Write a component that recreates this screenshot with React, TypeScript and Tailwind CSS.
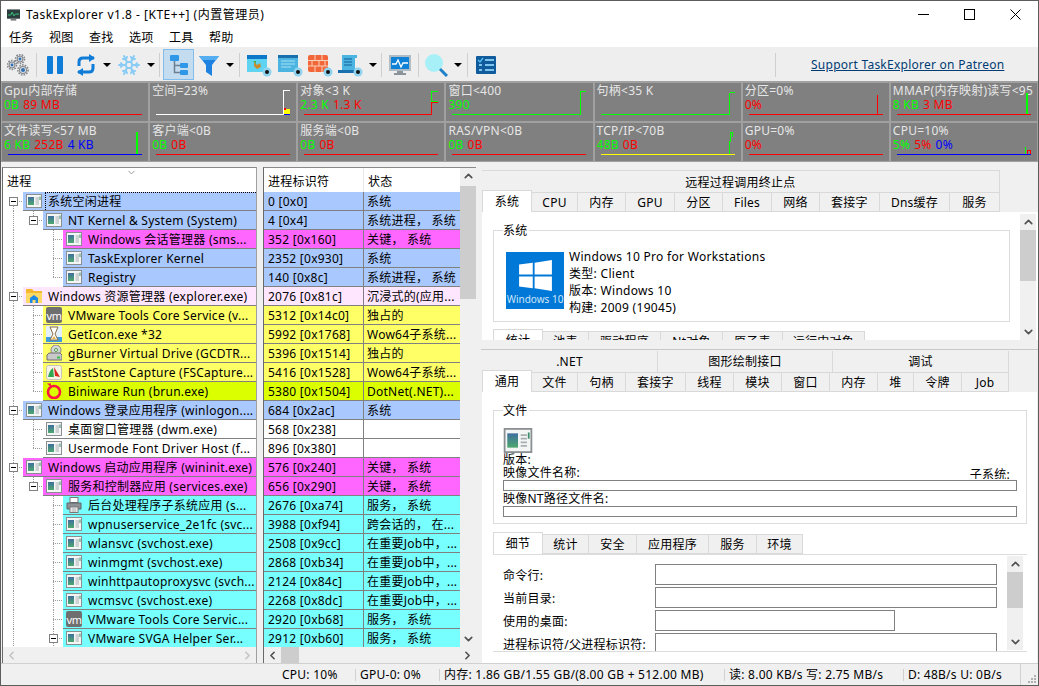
import { ChevronUp, ChevronDown, ChevronLeft, ChevronRight, Snowflake } from "lucide-react";
import type { ReactNode } from "react";

const C: Record<string, string> = {
  b: "bg-[#a8c8fe]",
  m: "bg-[#ff66ff]",
  p: "bg-[#ffe6ff]",
  y: "bg-[#ffff66]",
  l: "bg-[#dcff00]",
  c: "bg-[#77ffff]",
  w: "bg-white",
};
const INDENT = ["w-[20px]", "w-[40px]", "w-[60px]"];

type Row = { l: number; n: string; id: string; s: string; c: string; i: string; t?: boolean; last?: boolean };

const rows: Row[] = [
  { l: 0, n: "系统空闲进程", id: "0 [0x0]", s: "系统", c: "b", i: "app", t: true },
  { l: 1, n: "NT Kernel & System (System)", id: "4 [0x4]", s: "系统进程， 系统", c: "b", i: "app", t: true, last: true },
  { l: 2, n: "Windows 会话管理器 (sms...", id: "352 [0x160]", s: "关键， 系统", c: "m", i: "app" },
  { l: 2, n: "TaskExplorer Kernel", id: "2352 [0x930]", s: "系统", c: "b", i: "app" },
  { l: 2, n: "Registry", id: "140 [0x8c]", s: "系统进程， 系统", c: "b", i: "app", last: true },
  { l: 0, n: "Windows 资源管理器 (explorer.exe)", id: "2076 [0x81c]", s: "沉浸式的(应用...", c: "p", i: "folder", t: true },
  { l: 1, n: "VMware Tools Core Service (v...", id: "5312 [0x14c0]", s: "独占的", c: "y", i: "vm" },
  { l: 1, n: "GetIcon.exe *32", id: "5992 [0x1768]", s: "Wow64子系统...", c: "y", i: "hour" },
  { l: 1, n: "gBurner Virtual Drive (GCDTR...", id: "5396 [0x1514]", s: "独占的", c: "y", i: "burner" },
  { l: 1, n: "FastStone Capture (FSCapture...", id: "5416 [0x1528]", s: "Wow64子系统...", c: "y", i: "fs" },
  { l: 1, n: "Biniware Run (brun.exe)", id: "5380 [0x1504]", s: "DotNet(.NET)...", c: "l", i: "ring", last: true },
  { l: 0, n: "Windows 登录应用程序 (winlogon....", id: "684 [0x2ac]", s: "系统", c: "b", i: "app", t: true },
  { l: 1, n: "桌面窗口管理器 (dwm.exe)", id: "568 [0x238]", s: "", c: "w", i: "app" },
  { l: 1, n: "Usermode Font Driver Host (f...", id: "896 [0x380]", s: "", c: "w", i: "app", last: true },
  { l: 0, n: "Windows 启动应用程序 (wininit.exe)", id: "576 [0x240]", s: "关键， 系统", c: "m", i: "app", t: true },
  { l: 1, n: "服务和控制器应用 (services.exe)", id: "656 [0x290]", s: "关键， 系统", c: "m", i: "app", t: true, last: true },
  { l: 2, n: "后台处理程序子系统应用 (s...", id: "2676 [0xa74]", s: "服务， 系统", c: "c", i: "printer" },
  { l: 2, n: "wpnuserservice_2e1fc (svc...", id: "3988 [0xf94]", s: "跨会话的， 在...", c: "c", i: "app" },
  { l: 2, n: "wlansvc (svchost.exe)", id: "2508 [0x9cc]", s: "在重要Job中，...", c: "c", i: "app" },
  { l: 2, n: "winmgmt (svchost.exe)", id: "2868 [0xb34]", s: "在重要Job中，...", c: "c", i: "app" },
  { l: 2, n: "winhttpautoproxysvc (svch...", id: "2124 [0x84c]", s: "在重要Job中，...", c: "c", i: "app" },
  { l: 2, n: "wcmsvc (svchost.exe)", id: "2268 [0x8dc]", s: "在重要Job中，...", c: "c", i: "app" },
  { l: 2, n: "VMware Tools Core Servic...", id: "2920 [0xb68]", s: "服务， 系统", c: "c", i: "vm" },
  { l: 2, n: "VMware SVGA Helper Ser...", id: "2912 [0xb60]", s: "服务， 系统", c: "c", i: "app", t: true },
];

const G = "text-[#00ff00]";
const R = "text-[#ff0000]";
const B = "text-[#0000ff]";

type Graph = { title: string; vals: [string, string][]; lines: [string, string][]; fill?: ReactNode };

const red = "M6 31.5H140";
const graphs: Graph[] = [
  { title: "Gpu内部存储", vals: [["0B", G], ["89 MB", R]], lines: [[red, "#ff0000"]] },
  {
    title: "空间=23%", vals: [], lines: [["M6 31.5H133.5V7.5H140", "#ffffff"], ["M134 31.5H140", "#0000ff"]],
    fill: <><rect x="134" y="26" width="6" height="5" fill="#ffff00" /><rect x="134" y="25" width="2" height="2" fill="#ff0000" /></>,
  },
  { title: "对象<3 K", vals: [["2.3 K", G], ["1.3 K", R]], lines: [["M6 31.5H133.5V19.5H140", "#ff0000"], ["M140 8.5H133.5V18.5H140", "#00ff00"]] },
  { title: "窗口<400", vals: [["390", G]], lines: [["M6 31.5H134.5V8.5H140", "#00ff00"]] },
  { title: "句柄<35 K", vals: [], lines: [["M6 31.5H134.5V10.5L136 9.5H140", "#00ff00"]] },
  { title: "分区=0%", vals: [["0%", R]], lines: [[red, "#ff0000"], ["M134.5 31V12", "#ff0000"]] },
  { title: "MMAP(内存映射)读写<95", vals: [["8 KB", G], ["3 MB", R]], lines: [[red, "#ff0000"], ["M135 31V10M136 31V10", "#00ff00"]] },
  { title: "文件读写<57 MB", vals: [["6 KB", G], ["252B", R], ["4 KB", B]], lines: [["M6 31.5H140", "#0000ff"], ["M134.5 31V9M135.5 31V9", "#00ff00"]] },
  { title: "客户端<0B", vals: [["0B", G], ["0B", R]], lines: [[red, "#ff0000"]] },
  { title: "服务端<0B", vals: [["0B", G], ["0B", R]], lines: [[red, "#ff0000"]] },
  { title: "RAS/VPN<0B", vals: [["0B", G], ["0B", R]], lines: [[red, "#ff0000"]] },
  { title: "TCP/IP<70B", vals: [["48B", G], ["0B", R]], lines: [["M6 31.5H140", "#ffff00"], ["M134.5 31V18H135.5V9H137.5V14", "#00ff00"]] },
  { title: "GPU=0%", vals: [["0%", R]], lines: [[red, "#ff0000"]] },
  { title: "CPU=10%", vals: [["5%", G], ["5%", R], ["0%", B]], lines: [["M6 31.5H140", "#0000ff"], ["M134.5 31V24", "#00ff00"], ["M136 31V27H139V31", "#ff0000"]] },
];

function AppIcon({ big }: { big?: boolean }) {
  return (
    <svg viewBox="0 0 16 14" className={big ? "w-[30px] h-[25px]" : "w-[16px] h-[14px] shrink-0"}>
      <defs>
        <linearGradient id="appg" x1="0" y1="0" x2="0" y2="1">
          <stop offset="0" stopColor="#3f6f9f" />
          <stop offset="1" stopColor="#4da86d" />
        </linearGradient>
      </defs>
      <rect x="0.5" y="0.5" width="15" height="13" fill="#f4f6f6" stroke="#8a8f92" />
      <rect x="2" y="3" width="6" height="8" fill="url(#appg)" />
      <path d="M9.5 4H13M9.5 6H13M9.5 8H13M9.5 10H13" stroke="#a9aeb0" />
      <path d="M14 2.5V6" stroke="#3c8f6a" />
    </svg>
  );
}

function RowIcon({ k }: { k: string }) {
  if (k === "app") return <AppIcon />;
  if (k === "folder")
    return (
      <svg viewBox="0 0 16 16" className="w-[16px] h-[16px] shrink-0">
        <path d="M0 1H6L8 3H16V15H0Z" fill="#f4b92e" />
        <rect x="0" y="5" width="16" height="10" fill="#ffd966" />
        <path d="M4 15V10L8 7L12 10V15H9.5V12H6.5V15Z" fill="#1e88e5" />
      </svg>
    );
  if (k === "vm")
    return (
      <div className="w-[16px] h-[16px] shrink-0 rounded-[2px] bg-[#6f6f6f] flex items-center justify-center text-white text-[11px] tracking-[-0.5px] leading-none">
        vm
      </div>
    );
  if (k === "hour")
    return (
      <svg viewBox="0 0 16 16" className="w-[16px] h-[16px] shrink-0">
        <rect x="0" y="0" width="16" height="16" fill="#e4f1fb" />
        <rect x="0" y="11" width="16" height="5" fill="#3d9be0" />
        <path d="M4 1H12L9 8L12 14H4L7 8Z" fill="#fff" stroke="#8d6e3f" />
        <path d="M6 13L8 10L10 13Z" fill="#e8b04a" />
      </svg>
    );
  if (k === "burner")
    return (
      <svg viewBox="0 0 16 16" className="w-[16px] h-[16px] shrink-0">
        <circle cx="10" cy="5" r="5" fill="#d6d6d6" stroke="#888" />
        <circle cx="10" cy="5" r="1.5" fill="#fff" stroke="#4a9a4a" />
        <path d="M1 10L3 8H14L16 10V15H1Z" fill="#c9c9c9" stroke="#6f6f6f" />
        <rect x="11" y="11.5" width="3" height="2" fill="#3fbf4f" />
      </svg>
    );
  if (k === "fs")
    return (
      <svg viewBox="0 0 16 16" className="w-[16px] h-[16px] shrink-0">
        <rect x="0.5" y="1.5" width="15" height="14" rx="2" fill="#f5f2e8" stroke="#c9c4b4" />
        <path d="M2 13C3 8 5 5 7 4L8 13Z" fill="#2fa84f" />
        <path d="M8 3L14 13L9 12Z" fill="#d8281e" />
      </svg>
    );
  if (k === "ring")
    return (
      <svg viewBox="0 0 16 16" className="w-[16px] h-[16px] shrink-0">
        <circle cx="8" cy="9" r="6" fill="none" stroke="#ff1744" strokeWidth="2.6" />
        <path d="M1 0.5H5V4Z" fill="#ff1744" />
      </svg>
    );
  return (
    <svg viewBox="0 0 16 16" className="w-[16px] h-[16px] shrink-0">
      <rect x="4" y="0.5" width="8" height="5" fill="#fff" stroke="#777" />
      <path d="M1 6H15V12H1Z" fill="#8d9296" stroke="#5f6568" />
      <rect x="4" y="10" width="8" height="5.5" fill="#fff" stroke="#777" />
      <path d="M5.5 12H10.5M5.5 14H10.5" stroke="#999" />
    </svg>
  );
}

function TreeRow({ r, i }: { r: Row; i: number }) {
  const mid = 9.5;
  const x = 10 + r.l * 20;
  return (
    <div className="flex h-[19px]">
      <div className={`relative shrink-0 ${INDENT[r.l]}`}>
        <svg className="absolute inset-0 w-full h-[19px]" fill="none" stroke="#9a9a9a" strokeDasharray="1 1" shapeRendering="crispEdges">
          <path d={`M10.5 ${i === 0 ? mid : 0}V19`} />
          {r.l > 0 && <path d={`M${x + 0.5} 0V${r.last ? mid : 19}`} />}
          <path d={`M${x} ${mid}H${x + 10}`} />
        </svg>
        {r.t && (
          <div className="absolute top-[5px] w-[9px] h-[9px] border border-[#808080] bg-white flex items-center justify-center" style={{ left: x - 4 }}>
            <div className="w-[5px] h-[1px] bg-black" />
          </div>
        )}
      </div>
      <div className={`flex-1 min-w-0 flex items-center border-b border-[#808080] pl-[3px] ${C[r.c]}`}>
        <RowIcon k={r.i} />
        <span className={`ml-[3px] h-full pt-[1px] flex items-center whitespace-nowrap ${i === 0 ? "pl-[2px] border-l border-t border-dotted border-black flex-1" : "pl-[3px]"}`}>{r.n}</span>
      </div>
    </div>
  );
}

function VBar({ before, thumb }: { before: string; thumb: string }) {
  return (
    <div className="w-[16px] shrink-0 h-full bg-[#f0f0f0] flex flex-col items-center">
      <ChevronUp size={13} strokeWidth={3} className="text-[#505050] h-[16px] shrink-0" />
      <div className={before} />
      <div className={`w-full bg-[#cdcdcd] ${thumb}`} />
      <div className="flex-1" />
      <ChevronDown size={13} strokeWidth={3} className="text-[#505050] h-[16px] shrink-0" />
    </div>
  );
}

function HBar({ off }: { off?: boolean }) {
  const col = off ? "text-[#c4c4c4]" : "text-[#505050]";
  return (
    <div className="h-[16px] shrink-0 bg-[#f0f0f0] flex items-center">
      <ChevronLeft size={13} strokeWidth={3} className={`w-[17px] shrink-0 ${col}`} />
      {!off && <div className="w-[18px] h-full bg-[#cdcdcd]" />}
      <div className="flex-1" />
      <ChevronRight size={13} strokeWidth={3} className={`w-[17px] shrink-0 ${col}`} />
    </div>
  );
}

type Tab = { t: string; w: string };

function Tabs({ tabs, active }: { tabs: Tab[]; active?: boolean }) {
  return (
    <div className="flex h-[20px] shrink-0">
      {tabs.map((x, i) => (
        <div
          key={x.t}
          className={
            active && i === 0
              ? `${x.w} h-[22px] -mt-[2px] bg-white border-t border-l border-r border-[#d9d9d9] z-10 flex items-center justify-center shrink-0`
              : `${x.w} h-[20px] pt-[1px] bg-[#f0f0f0] border-t border-r border-b border-[#d9d9d9] flex items-center justify-center shrink-0`
          }
        >
          {x.t}
        </div>
      ))}
    </div>
  );
}

function Group({ label, className, children }: { label: string; className: string; children: ReactNode }) {
  return (
    <div className={`relative border border-[#dcdcdc] shrink-0 ${className}`}>
      <span className="absolute -top-[7px] left-[9px] bg-white pr-[1px] leading-[14px]">{label}</span>
      {children}
    </div>
  );
}

function Sep({ className }: { className: string }) {
  return <div className={`w-[1px] h-[24px] bg-[#cfcfcf] shrink-0 ${className}`} />;
}

function Arrow({ className }: { className: string }) {
  return <div className={`w-0 h-0 border-l-[4px] border-r-[4px] border-t-[4px] border-l-transparent border-r-transparent border-t-black shrink-0 ${className}`} />;
}

function Eye() {
  return (
    <>
      <circle cx="21" cy="19" r="4.5" fill="#8fd3ee" />
      <circle cx="21" cy="19" r="2" fill="#111" />
    </>
  );
}

function Gears() {
  const g = (cx: number, cy: number, r: number) => (
    <g key={cx}>
      <circle cx={cx} cy={cy} r={r + 1.1} fill="none" stroke="#83878b" strokeWidth="1.6" strokeDasharray="1.6 1.2" />
      <circle cx={cx} cy={cy} r={r} fill="#83878b" />
      <circle cx={cx} cy={cy} r={r - 1} fill="#d8dde2" />
      <circle cx={cx} cy={cy} r={r - 2} fill="#2f6fb5" />
    </g>
  );
  return (
    <svg viewBox="0 0 22 22" className="w-[22px] h-[22px] shrink-0 ml-[6px]">
      {g(13, 5, 3.4)}
      {g(5, 11, 3.4)}
      {g(16, 16, 4)}
    </svg>
  );
}

function Toolbar() {
  return (
    <div className="h-[35px] shrink-0 pt-[1px] bg-[#eeeeee] flex items-center border-b border-[#a0a0a0]">
      <Gears />
      <Sep className="ml-[7px]" />
      <svg viewBox="0 0 22 22" className="w-[22px] h-[22px] shrink-0 ml-[7px]">
        <rect x="3" y="2" width="6" height="18" rx="1" fill="#0f7dd8" />
        <rect x="13" y="2" width="6" height="18" rx="1" fill="#0f7dd8" />
      </svg>
      <svg viewBox="0 0 24 24" fill="none" className="w-[24px] h-[24px] shrink-0 ml-[8px]">
        <path d="M5 13V9C5 6.5 6.5 5 9 5H20" stroke="#0f7dd8" strokeWidth="3" />
        <path d="M19 11V15C19 17.5 17.5 19 15 19H4" stroke="#0f7dd8" strokeWidth="3" />
        <path d="M15 1L21 5L15 9Z" fill="#0f7dd8" />
        <path d="M9 15L3 19L9 23Z" fill="#0f7dd8" />
      </svg>
      <Arrow className="ml-[5px]" />
      <Snowflake size={24} strokeWidth={2} className="text-[#8accf6] shrink-0 ml-[6px]" />
      <Arrow className="ml-[6px]" />
      <Sep className="ml-[4px]" />
      <div className="w-[31px] h-[31px] shrink-0 ml-[3px] bg-[#c4dcf0] border border-[#83bdec] flex items-center justify-center">
        <svg viewBox="0 0 22 22" className="w-[22px] h-[22px]">
          <rect x="2" y="1" width="9" height="6" rx="1" fill="#2f97e8" />
          <rect x="12" y="9" width="8" height="5" rx="1" fill="#2f97e8" />
          <rect x="12" y="16" width="8" height="5" rx="1" fill="#2f97e8" />
          <path d="M6.5 7V18.5H12M6.5 11.5H12" fill="none" stroke="#6c7f90" strokeWidth="1.5" />
        </svg>
      </div>
      <svg viewBox="0 0 24 24" className="w-[24px] h-[24px] shrink-0 ml-[3px]">
        <path d="M2 3H22L15 12V23L9 19V12Z" fill="#1f82e0" />
        <path d="M2 3H22L19 7H5Z" fill="#56aef2" />
      </svg>
      <Arrow className="ml-[5px]" />
      <Sep className="ml-[5px]" />
      <svg viewBox="0 0 26 24" className="w-[26px] h-[24px] shrink-0 ml-[6px]">
        <rect x="1" y="2" width="20" height="17" fill="#5fd4f2" />
        <rect x="1" y="2" width="20" height="4" fill="#0f78c8" />
        <path d="M8 9L11 12L14 10L15 14L11 16L8 13Z" fill="#c98a2c" />
        <path d="M7 8L10 8L10 11Z" fill="#4aa84a" />
        <Eye />
      </svg>
      <svg viewBox="0 0 26 24" className="w-[26px] h-[24px] shrink-0 ml-[5px]">
        <rect x="1" y="2" width="20" height="17" fill="#4cb4e0" />
        <rect x="1" y="2" width="20" height="3" fill="#1a6fae" />
        <path d="M4 8H18M4 11H18M4 14H14" stroke="#a6e0f5" strokeWidth="1.2" />
        <Eye />
      </svg>
      <svg viewBox="0 0 26 24" className="w-[26px] h-[24px] shrink-0 ml-[4px]">
        <rect x="1" y="2" width="20" height="17" rx="2" fill="#f2673a" />
        <path d="M1 7.5H21M1 13H21M8 2V7.5M15 2V7.5M5 7.5V13M12 7.5V13M18 7.5V13M8 13V19M15 13V19" stroke="#fbd0b8" strokeWidth="1" />
        <Eye />
      </svg>
      <svg viewBox="0 0 26 24" className="w-[26px] h-[24px] shrink-0 ml-[4px]">
        <path d="M5 2H20V5H18V17H5Z" fill="#4cb4e0" />
        <path d="M1 17H18V20H1Z" fill="#1a6fae" />
        <path d="M7 6H15M7 9H15M7 12H15" stroke="#0f5f9a" strokeWidth="1.2" />
        <Eye />
      </svg>
      <Arrow className="ml-[6px]" />
      <Sep className="ml-[4px]" />
      <svg viewBox="0 0 24 24" className="w-[24px] h-[24px] shrink-0 ml-[6px]">
        <rect x="1" y="2" width="22" height="16" fill="#b0bcc4" />
        <rect x="3" y="4" width="18" height="12" fill="#0f82d8" />
        <path d="M4 11H8L10 7L13 14L15 10H20" fill="none" stroke="#fff" strokeWidth="1.3" />
        <rect x="9" y="18" width="6" height="2" fill="#8a949a" />
        <rect x="6" y="20" width="12" height="2" fill="#8a949a" />
      </svg>
      <Sep className="ml-[6px]" />
      <svg viewBox="0 0 24 24" className="w-[24px] h-[24px] shrink-0 ml-[5px]">
        <circle cx="10" cy="10" r="9" fill="#a8f0f8" />
        <path d="M16 16L23 23" stroke="#1f82c8" strokeWidth="3" />
      </svg>
      <Arrow className="ml-[6px]" />
      <Sep className="ml-[5px]" />
      <svg viewBox="0 0 22 22" className="w-[22px] h-[22px] shrink-0 ml-[7px]">
        <rect x="1" y="2" width="20" height="18" rx="1" fill="#0f5b9c" />
        <path d="M3 6L5 8L8 4" fill="none" stroke="#4fc0f0" strokeWidth="1.3" />
        <path d="M10 6H19M10 11H19M10 16H19M4 11H7M4 16H7" stroke="#7fc4ee" strokeWidth="1.8" />
      </svg>
      <Sep className="ml-[278px]" />
      <span className="ml-[35px] text-[#003c74] underline whitespace-nowrap">Support TaskExplorer on Patreon</span>
    </div>
  );
}

function GraphCell({ g }: { g: Graph }) {
  return (
    <div className="relative bg-[#808080] h-[38px] px-[2px] pt-[1px] leading-[14px] overflow-hidden">
      <div className="text-[#e6e6e6] whitespace-nowrap">{g.title}</div>
      <div className="flex gap-[4px] whitespace-nowrap">
        {g.vals.map(([v, c], i) => (
          <span key={i} className={c}>{v}</span>
        ))}
      </div>
      <svg className="absolute inset-0 w-full h-full" fill="none" shapeRendering="crispEdges">
        {g.fill}
        {g.lines.map(([d, c], i) => (
          <path key={i} d={d} stroke={c} />
        ))}
      </svg>
    </div>
  );
}

function Left() {
  return (
    <div className="w-[480px] shrink-0 flex pt-[5px]">
      <div className="w-[255px] ml-[1px] shrink-0 border-l border-t border-r border-l-[#6a6a6a] border-t-[#8a8a8a] border-r-[#a0a0a0] flex flex-col bg-white">
        <div className="relative h-[24px] shrink-0 flex items-center pl-[4px] pt-[3px]">
          进程
          <ChevronDown size={11} className="absolute left-[123px] -top-[1px] text-[#909090]" />
        </div>
        <div className="flex-1 min-h-0 overflow-hidden">
          {rows.map((r, i) => (
            <TreeRow key={r.id} r={r} i={i} />
          ))}
        </div>
        <HBar off />
      </div>
      <div className="w-[213px] ml-[6px] shrink-0 border-l border-t border-l-[#6a6a6a] border-t-[#8a8a8a] flex flex-col bg-white">
        <div className="flex-1 min-h-0 flex">
          <div className="flex-1 min-w-0 flex flex-col">
            <div className="h-[24px] shrink-0 flex items-center">
              <div className="w-[100px] pl-[4px] pt-[3px] border-r border-[#e8e8e8] h-full flex items-center">进程标识符</div>
              <div className="pl-[4px] pt-[3px]">状态</div>
            </div>
            <div className="flex-1 min-h-0 overflow-hidden">
              {rows.map((r) => (
                <div key={r.id} className={`flex h-[19px] border-b border-[#808080] ${C[r.c]}`}>
                  <div className="w-[100px] shrink-0 pl-[4px] pt-[1px] border-r border-[#808080] flex items-center whitespace-nowrap">{r.id}</div>
                  <div className="pl-[3px] pt-[1px] flex items-center whitespace-nowrap overflow-hidden">{r.s}</div>
                </div>
              ))}
            </div>
          </div>
          <VBar before="h-[2px]" thumb="h-[113px]" />
        </div>
        <HBar />
      </div>
    </div>
  );
}

function Upper() {
  return (
    <div className="h-[170px] shrink-0 mt-[8px] pl-[1px] flex flex-col overflow-hidden">
      <div className="w-[518px] h-[22px] shrink-0 pt-[2px] border-t border-r border-[#d9d9d9] bg-[#f0f0f0] flex items-center justify-center">远程过程调用终止点</div>
      <Tabs
        active
        tabs={[
          { t: "系统", w: "w-[50px]" }, { t: "CPU", w: "w-[46px]" }, { t: "内存", w: "w-[48px]" }, { t: "GPU", w: "w-[49px]" },
          { t: "分区", w: "w-[48px]" }, { t: "Files", w: "w-[49px]" }, { t: "网络", w: "w-[48px]" }, { t: "套接字", w: "w-[60px]" },
          { t: "Dns缓存", w: "w-[70px]" }, { t: "服务", w: "w-[50px]" },
        ]}
      />
      <div className="flex-1 min-h-0 bg-white flex">
        <div className="flex-1 min-w-0 pl-[11px] pt-[18px] overflow-hidden flex flex-col">
          <Group label="系统" className="w-[517px] h-[92px]">
            <div className="flex pl-[12px] pt-[21px]">
              <div className="relative w-[58px] h-[57px] bg-[#0078d7] shrink-0 flex flex-col items-center">
                <svg viewBox="0 0 36 34" className="w-[33px] h-[31px] mt-[8px]">
                  <path d="M0 5L15 3V16H0ZM17 3L36 0V16H17ZM0 18H15V31L0 29ZM17 18H36V34L17 31Z" fill="#fff" />
                </svg>
                <span className="text-[10px] tracking-normal leading-[12px] text-[#cfe6f7] mt-[2px] whitespace-nowrap">Windows 10</span>
              </div>
              <div className="ml-[5px] -mt-[4px] leading-[17px] tracking-[0.3px]">
                <div>Windows 10 Pro for Workstations</div>
                <div>类型: Client</div>
                <div>版本: Windows 10</div>
                <div>构建: 2009 (19045)</div>
              </div>
            </div>
          </Group>
          <div className="mt-[9px]">
            <Tabs
              active
              tabs={[
                { t: "统计", w: "w-[50px]" }, { t: "池表", w: "w-[46px]" }, { t: "驱动程序", w: "w-[72px]" },
                { t: "Nt对象", w: "w-[62px]" }, { t: "原子表", w: "w-[60px]" }, { t: "运行中对象", w: "w-[82px]" },
              ]}
            />
          </div>
        </div>
        <div className="mr-[2px] pt-[2px] h-full">
          <VBar before="h-0" thumb="h-[51px]" />
        </div>
      </div>
    </div>
  );
}

function Field({ label, w }: { label: string; w: string }) {
  return (
    <div className="flex items-center h-[21px] shrink-0">
      <div className="w-[162px] pl-[10px] pt-[2px] whitespace-nowrap shrink-0">{label}</div>
      <div className={`h-[21px] border border-[#808080] bg-white shrink-0 ${w}`} />
    </div>
  );
}

function Lower() {
  return (
    <div className="flex-1 min-h-0 mt-[9px] pl-[1px] flex flex-col border-t border-[#c8c8c8]">
      <div className="flex h-[22px] shrink-0 w-[527px] pt-[1px]">
        <div className="w-[176px] border-r border-[#d9d9d9] flex items-center justify-center">.NET</div>
        <div className="w-[175px] border-r border-[#d9d9d9] flex items-center justify-center">图形绘制接口</div>
        <div className="w-[176px] border-r border-[#d9d9d9] flex items-center justify-center">调试</div>
      </div>
      <Tabs
        active
        tabs={[
          { t: "通用", w: "w-[50px]" }, { t: "文件", w: "w-[46px]" }, { t: "句柄", w: "w-[48px]" }, { t: "套接字", w: "w-[60px]" },
          { t: "线程", w: "w-[48px]" }, { t: "模块", w: "w-[48px]" }, { t: "窗口", w: "w-[48px]" }, { t: "内存", w: "w-[48px]" },
          { t: "堆", w: "w-[36px]" }, { t: "令牌", w: "w-[48px]" }, { t: "Job", w: "w-[47px]" },
        ]}
      />
      <div className="flex-1 min-h-0 bg-white pl-[11px] pt-[18px] mr-[1px] flex flex-col overflow-hidden">
        <Group label="文件" className="w-[534px] h-[114px]">
          <div className="px-[9px] pt-[17px] leading-[13px]">
            <AppIcon big />
            <div>版本:</div>
            <div className="flex justify-between pr-[7px]">
              <span>映像文件名称:</span>
              <span className="h-[11px] overflow-hidden mt-[2px]">子系统:</span>
            </div>
            <div className="h-[11px] border border-[#808080] mt-[1px] w-[514px]" />
            <div className="mt-[1px]">映像NT路径文件名:</div>
            <div className="h-[11px] border border-[#808080] mt-[1px] w-[514px]" />
          </div>
        </Group>
        <div className="mt-[10px]">
          <Tabs
            active
            tabs={[
              { t: "细节", w: "w-[50px]" }, { t: "统计", w: "w-[46px]" }, { t: "安全", w: "w-[48px]" },
              { t: "应用程序", w: "w-[72px]" }, { t: "服务", w: "w-[48px]" }, { t: "环境", w: "w-[46px]" },
            ]}
          />
        </div>
        <div className="w-[534px] h-[98px] shrink-0 border-t border-b border-[#dcdcdc] flex overflow-hidden">
          <div className="flex-1 min-w-0 pt-[9px] flex flex-col gap-[2px] overflow-hidden">
            <Field label="命令行:" w="w-[342px]" />
            <Field label="当前目录:" w="w-[342px]" />
            <Field label="使用的桌面:" w="w-[240px]" />
            <Field label="进程标识符/父进程标识符:" w="w-[342px]" />
          </div>
          <div className="mr-[4px] py-[1px] h-full">
            <VBar before="h-0" thumb="h-[36px]" />
          </div>
        </div>
      </div>
    </div>
  );
}

function Status() {
  return (
    <div className="h-[22px] shrink-0 bg-[#f0f0f0] border-t border-[#d0d0d0] flex items-center whitespace-nowrap">
      <div className="w-[354px] shrink-0 pl-[281px]">CPU: 10%</div>
      <div className="w-[84px] shrink-0 pl-[4px] border-l border-[#d0d0d0]">GPU-0: 0%</div>
      <div className="w-[285px] shrink-0 pl-[4px] border-l border-[#d0d0d0]">内存: 1.86 GB/1.55 GB/(8.00 GB + 512.00 MB)</div>
      <div className="w-[179px] shrink-0 pl-[4px] border-l border-[#d0d0d0]">读: 8.00 KB/s 写: 2.75 MB/s</div>
      <div className="w-[117px] shrink-0 pl-[4px] border-l border-[#d0d0d0]">D: 48B/s U: 0B/s</div>
      <div className="h-full flex-1 border-l border-[#d0d0d0] flex items-end justify-end pr-[1px] pb-[1px]">
        <svg viewBox="0 0 10 10" className="w-[10px] h-[10px]" fill="#b0b0b0">
          <rect x="7" y="1" width="2" height="2" />
          <rect x="4" y="4" width="2" height="2" />
          <rect x="7" y="4" width="2" height="2" />
          <rect x="1" y="7" width="2" height="2" />
          <rect x="4" y="7" width="2" height="2" />
          <rect x="7" y="7" width="2" height="2" />
        </svg>
      </div>
    </div>
  );
}

export default function App() {
  return (
    <div className="w-[1039px] h-[686px] bg-[#f0f0f0] border border-[#5c5c5c] flex flex-col overflow-hidden text-[12px] tracking-[0.25px] leading-none text-black font-['Noto_Sans','Noto_Sans_CJK_SC',sans-serif]">
      <div className="h-[27px] shrink-0 bg-white flex items-center pl-[6px]">
        <svg viewBox="0 0 14 12" className="w-[13px] h-[12px] shrink-0">
          <rect width="14" height="10" fill="#2c3e3e" />
          <path d="M1 6H4L5.5 3L7.5 7L9 5H13" fill="none" stroke="#35d07f" />
          <rect x="4" y="10" width="6" height="2" fill="#777" />
        </svg>
        <span className="ml-[6px] tracking-[0.5px]">TaskExplorer v1.8 - [KTE++] (内置管理员)</span>
        <div className="ml-auto flex">
          <div className="w-[46px] h-[27px] flex items-center justify-center">
            <svg viewBox="0 0 11 11" className="w-[11px] h-[11px]"><path d="M0 5.5H11" stroke="#000" /></svg>
          </div>
          <div className="w-[46px] h-[27px] flex items-center justify-center">
            <svg viewBox="0 0 11 11" className="w-[11px] h-[11px]"><rect x="0.5" y="0.5" width="10" height="10" fill="none" stroke="#000" /></svg>
          </div>
          <div className="w-[46px] h-[27px] flex items-center justify-center">
            <svg viewBox="0 0 11 11" className="w-[11px] h-[11px]"><path d="M0.5 0.5L10.5 10.5M10.5 0.5L0.5 10.5" stroke="#000" /></svg>
          </div>
        </div>
      </div>
      <div className="h-[19px] shrink-0 bg-white flex items-center pl-[8px] gap-[16px]">
        {["任务", "视图", "查找", "选项", "工具", "帮助"].map((m) => (
          <span key={m} className="w-[24px] whitespace-nowrap">{m}</span>
        ))}
      </div>
      <Toolbar />
      <div className="h-[80px] shrink-0 bg-[#a0a0a0] p-[1px] grid grid-cols-7 gap-[2px] content-start">
        {graphs.map((g) => (
          <GraphCell key={g.title} g={g} />
        ))}
      </div>
      <div className="flex-1 min-h-0 flex">
        <Left />
        <div className="flex-1 min-w-0 flex flex-col">
          <Upper />
          <Lower />
        </div>
      </div>
      <Status />
    </div>
  );
}
